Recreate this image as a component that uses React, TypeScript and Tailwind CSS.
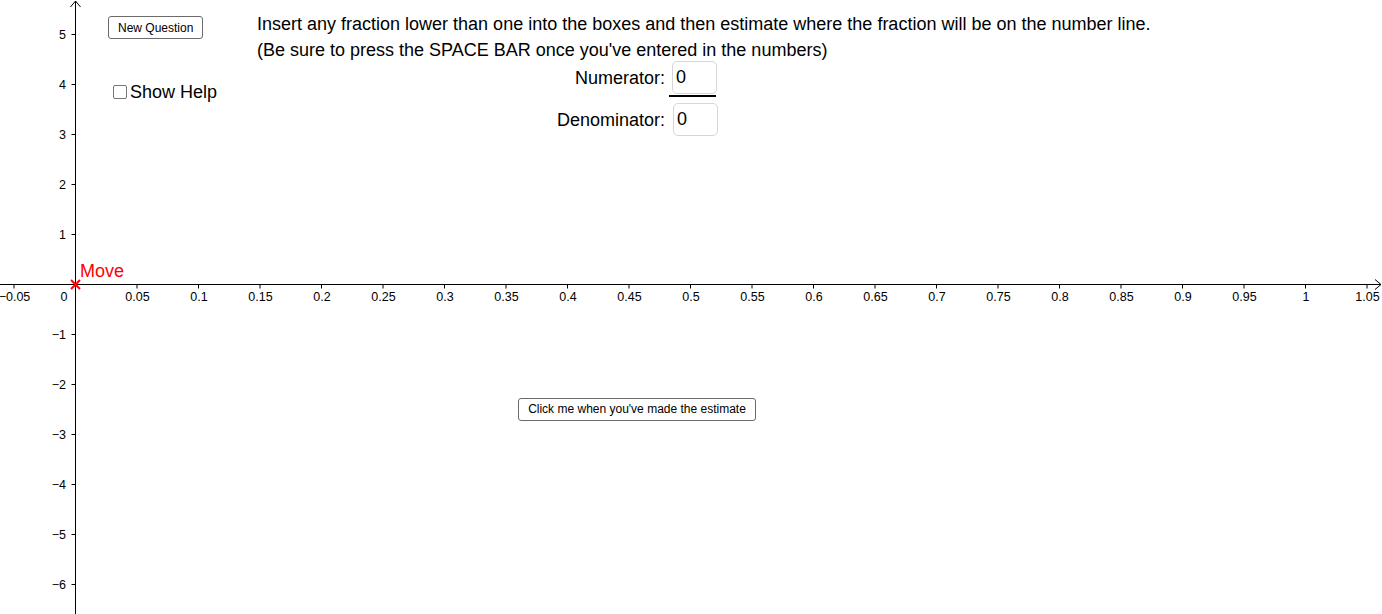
import React from "react";

const UNIT_X = 1230; // px per 1.0 on the x axis
const ORIGIN_X = 75.5;
const ORIGIN_Y = 284.5;
const UNIT_Y = 50;

function fmt(v: number): string {
  const s = parseFloat(v.toFixed(2)).toString();
  return s.startsWith("-") ? "\u2212" + s.slice(1) : s;
}

function Axes() {
  const xTicks = Array.from({ length: 23 }, (_, i) => i - 1);
  const yTicks = [5, 4, 3, 2, 1, -1, -2, -3, -4, -5, -6];
  return (
    <svg
      width={1382}
      height={614}
      className="absolute inset-0 block"
      style={{ fontFamily: '"Liberation Sans", Arial, sans-serif' }}
    >
      <line x1={0} y1={ORIGIN_Y} x2={1381} y2={ORIGIN_Y} stroke="#000" strokeWidth={1} />
      <polyline
        points={`1375,${ORIGIN_Y - 5} 1381,${ORIGIN_Y} 1375,${ORIGIN_Y + 5}`}
        fill="none"
        stroke="#000"
      />
      <line x1={ORIGIN_X} y1={1} x2={ORIGIN_X} y2={614} stroke="#000" strokeWidth={1} />
      <polyline
        points={`${ORIGIN_X - 5},7 ${ORIGIN_X},1 ${ORIGIN_X + 5},7`}
        fill="none"
        stroke="#000"
      />
      {xTicks.map((k) => {
        const x = ORIGIN_X + 0.5 + (k * UNIT_X) / 20;
        if (k === 0) {
          return (
            <text key={k} x={64} y={301} fontSize={12.5} textAnchor="middle" fill="#000">
              0
            </text>
          );
        }
        return (
          <g key={k}>
            <line x1={x - 0.5} y1={ORIGIN_Y} x2={x - 0.5} y2={ORIGIN_Y + 4} stroke="#000" />
            <text x={x} y={301} fontSize={12.5} textAnchor="middle" fill="#000">
              {fmt(k * 0.05)}
            </text>
          </g>
        );
      })}
      {yTicks.map((v) => {
        const y = ORIGIN_Y - v * UNIT_Y;
        return (
          <g key={v}>
            <line x1={ORIGIN_X - 4} y1={y} x2={ORIGIN_X} y2={y} stroke="#000" />
            <text x={66} y={y + 4.5} fontSize={12.5} textAnchor="end" fill="#000">
              {fmt(v)}
            </text>
          </g>
        );
      })}
      <g stroke="#ff0000" strokeWidth={2}>
        <line x1={ORIGIN_X - 4.5} y1={ORIGIN_Y - 4.5} x2={ORIGIN_X + 4.5} y2={ORIGIN_Y + 4.5} />
        <line x1={ORIGIN_X - 4.5} y1={ORIGIN_Y + 4.5} x2={ORIGIN_X + 4.5} y2={ORIGIN_Y - 4.5} />
      </g>
      <text x={80} y={277} fontSize={18} fill="#ff0000">
        Move
      </text>
    </svg>
  );
}

function GgbButton({ label, className = "" }: { label: string; className?: string }) {
  return (
    <button
      className={`h-[23px] rounded-[3px] border border-[#6b6b6b] bg-white px-[9px] text-[12px] leading-none text-black ${className}`}
    >
      {label}
    </button>
  );
}

function NumberBox() {
  return (
    <div className="h-[33px] w-[45px] rounded-[5px] border border-[#d6d6d6] bg-white pl-[3px] pt-[4px] text-[18px] leading-[22px]">
      0
    </div>
  );
}

export default function App() {
  return (
    <div
      className="relative h-[614px] w-[1382px] overflow-hidden bg-white text-black"
      style={{ fontFamily: '"Liberation Sans", Arial, sans-serif' }}
    >
      <Axes />

      {/* left-hand widgets */}
      <div className="absolute left-[108px] top-[16px] flex flex-col items-start gap-[42px]">
        <GgbButton label="New Question" />
        <label className="ml-[5px] flex items-center gap-[3px] text-[18px] leading-[22px]">
          <span className="h-[14px] w-[14px] rounded-[2px] border border-[#767676] bg-white" />
          Show Help
        </label>
      </div>

      {/* instructions */}
      <div className="absolute left-[257px] top-[11px] text-[18px] leading-[26px]">
        <p>
          Insert any fraction lower than one into the boxes and then estimate where the
          fraction will be on the number line.
        </p>
        <p>(Be sure to press the SPACE BAR once you've entered in the numbers)</p>
      </div>

      {/* fraction inputs */}
      <div className="absolute right-[664px] top-[61px] grid grid-cols-[auto_auto] items-center gap-x-[7px] gap-y-[9px] text-[18px] leading-[22px]">
        <span className="text-right">Numerator:</span>
        <NumberBox />
        <span className="text-right">Denominator:</span>
        <div className="relative pl-[1px]">
          <div className="absolute -top-[8px] -left-[3px] h-[2px] w-[47px] bg-black" />
          <NumberBox />
        </div>
      </div>

      <div className="absolute left-[518px] top-[396px]">
        <GgbButton label="Click me when you've made the estimate" className="w-[238px]" />
      </div>
    </div>
  );
}
